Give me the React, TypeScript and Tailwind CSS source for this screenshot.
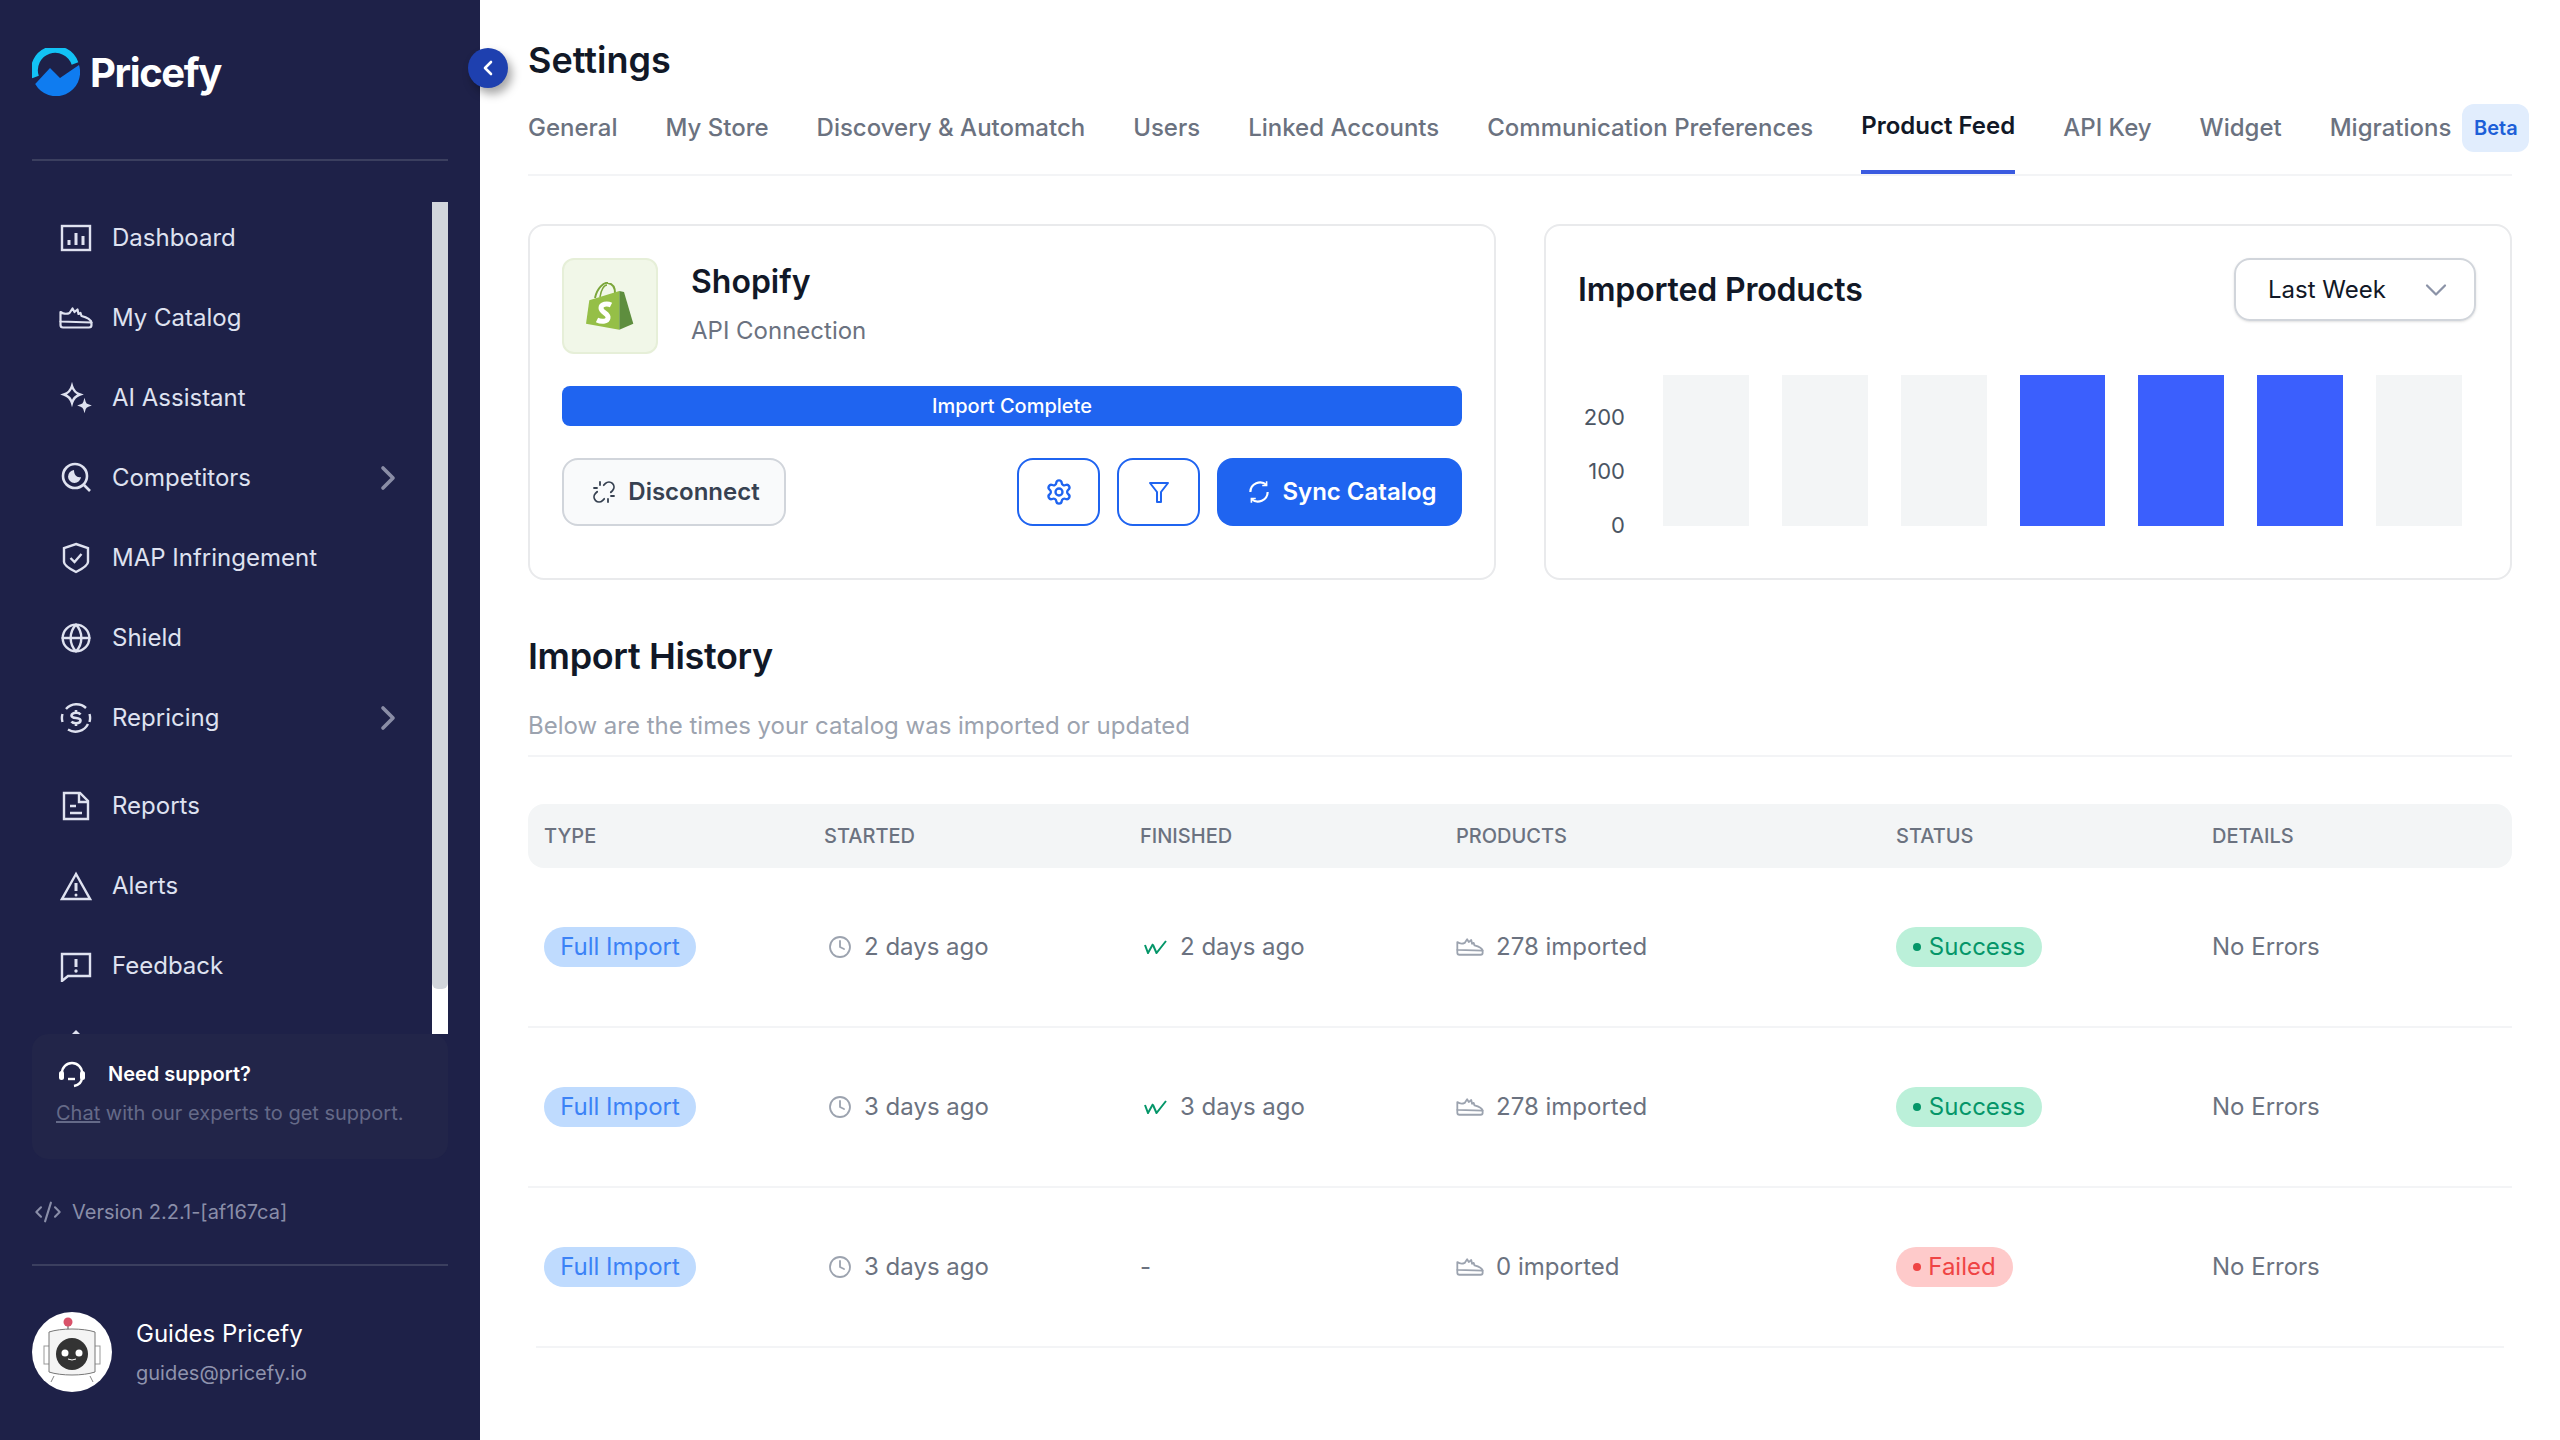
import type { ReactNode } from 'react';
import {
  ChevronDown,
  ChevronLeft,
  ChevronRight,
  Clock,
  CodeXml,
  Globe,
  Settings,
  Unlink,
} from 'lucide-react';

function Shoe({ className }: { className?: string }) {
  return (
    <svg viewBox="0 0 34 22" fill="none" stroke="currentColor" strokeWidth="2.200" strokeLinejoin="round" strokeLinecap="round" className={className}>
      <path d="M1.500 14.500 V5 c2 1.500 6 2.500 9 1 l3-4.500 2 3.500 3-2.500 1 4.500 2-1 1 3 c4 1 9 2.500 10 6.500 Z" />
      <path d="M1.500 14.500 v3.500 a2.500 2.500 0 0 0 2.500 2.500 h26 a2.500 2.500 0 0 0 2.500-2.500 c0-1.500-.2-2.500-.5-3.500" />
    </svg>
  );
}

function NavIcon({ name }: { name: string }) {
  const cls = 'h-8 w-8 shrink-0';
  const props = { viewBox: '0 0 32 32', fill: 'none', stroke: 'currentColor', strokeWidth: 2.4, className: cls };
  switch (name) {
    case 'dashboard':
      return (
        <svg {...props}>
          <rect x="2" y="4" width="28" height="24" />
          <path d="M9 23v-5M16 23V11M23 23v-9" strokeWidth="3" />
        </svg>
      );
    case 'catalog':
      return <Shoe className="-mx-px h-[22px] w-[34px] shrink-0" />;
    case 'ai':
      return (
        <svg {...props}>
          <path d="M12 4c1.500 5 3.500 7 8 8.500-4.500 1.500-6.500 3.500-8 8.500-1.500-5-3.500-7-8-8.500 4.500-1.500 6.500-3.500 8-8.500Z" />
          <path d="M24.500 20c.6 2 1.400 2.800 3.500 3.500-2.100.7-2.900 1.500-3.500 3.500-.6-2-1.400-2.800-3.500-3.500 2.100-.7 2.900-1.500 3.500-3.500Z" fill="currentColor" />
        </svg>
      );
    case 'competitors':
      return (
        <svg {...props}>
          <circle cx="15" cy="14" r="12" strokeWidth="2.600" />
          <path d="M24 23l6 6" strokeWidth="2.600" />
          <path d="M14 8a6.500 6.500 0 1 0 7 7c-4 1-7-2-7-7Z" fill="currentColor" stroke="none" />
        </svg>
      );
    case 'map':
      return (
        <svg {...props}>
          <path d="M16 2l12 4v14c0 3-6 7-12 10C10 27 4 23 4 20V6l12-4Z" />
          <path d="M10.500 16l4 4 7-8" />
        </svg>
      );
    case 'shield':
      return <Globe className={cls} strokeWidth={1.800} />;
    case 'repricing':
      return (
        <svg {...props}>
          <path d="M6 7A14 14 0 0 1 26 6M28 22A14 14 0 0 1 8 27.500M2.500 20a14 14 0 0 1 0-8M29.500 12a14 14 0 0 1 0 8" strokeWidth="2.400" />
          <path d="M20.500 12.500c-.8-1.200-2.500-1.700-4.500-1.700-2.700 0-4.500 1-4.500 2.700 0 2 2 2.300 4.500 2.500s4.500.6 4.500 2.500c0 1.700-1.800 2.700-4.500 2.700-2 0-3.700-.5-4.500-1.700M16 8v2.500M16 21.500V24" strokeWidth="2.600" />
        </svg>
      );
    case 'reports':
      return (
        <svg {...props}>
          <path d="M4 3h16l8 8v18H4V3Z" />
          <path d="M19 3v9h9M10 16h6M10 23h12" />
        </svg>
      );
    case 'alerts':
      return (
        <svg {...props}>
          <path d="M16 4L2 29h28L16 4Z" />
          <path d="M16 13v8" strokeWidth="3" />
          <circle cx="16" cy="25" r="1.500" fill="currentColor" stroke="none" />
        </svg>
      );
    default:
      return (
        <svg {...props}>
          <path d="M2 4h28v22H8l-6 5V4Z" />
          <path d="M16 9v8" strokeWidth="3" />
          <circle cx="16" cy="21" r="1.700" fill="currentColor" stroke="none" />
        </svg>
      );
  }
}

const navItems = [
  { key: 'dashboard', label: 'Dashboard' },
  { key: 'catalog', label: 'My Catalog' },
  { key: 'ai', label: 'AI Assistant' },
  { key: 'competitors', label: 'Competitors', more: true },
  { key: 'map', label: 'MAP Infringement' },
  { key: 'shield', label: 'Shield' },
  { key: 'repricing', label: 'Repricing', more: true },
  { key: 'reports', label: 'Reports', gap: true },
  { key: 'alerts', label: 'Alerts' },
  { key: 'feedback', label: 'Feedback' },
];

function Sidebar() {
  return (
    <aside className="relative flex h-[1440px] w-[480px] shrink-0 flex-col bg-[#1e2148] px-8">
      <div className="flex h-[161px] items-start gap-[10px] border-b-2 border-[#3b3f5f] pt-12">
        <svg viewBox="0 0 48 48" className="h-12 w-12 shrink-0" fill="none">
          <path d="M3.500 29 A20.500 20.500 0 0 1 43 15.500" stroke="#12c2f4" strokeWidth="7" />
          <path d="M3.200 36 L18 20 L28 30 L47 17 A24 24 0 0 1 3.200 36 Z" fill="#0f7cf0" />
        </svg>
        <span className="mt-px text-[40px] font-bold leading-[48px] tracking-[-0.035em] text-white">Pricefy</span>
      </div>

      <div className="mt-[37px] flex h-[836px] overflow-hidden">
        <nav className="flex-1">
          {navItems.map((item) => (
            <div key={item.key} className={`flex h-20 items-center pl-7 pr-6 text-[#dfe2f0] ${item.gap ? 'mt-2' : ''}`}>
              <NavIcon name={item.key} />
              <span className="ml-5 flex-1 text-[24px] leading-8">{item.label}</span>
              {item.more && <ChevronRight className="h-10 w-10 text-[#8a8da6]" strokeWidth={2.200} />}
            </div>
          ))}
          <div className="flex h-[29px] items-end pl-[39px]">
            <div className="h-0 w-0 border-x-[5px] border-b-[5px] border-x-transparent border-b-[#dfe2f0]" />
          </div>
        </nav>
        <div className="mt-1 w-4 bg-white">
          <div className="h-[787px] rounded-b-md bg-[#d1d5db]" />
        </div>
      </div>

      <div className="h-[125px] rounded-2xl bg-[#222549] px-6 pt-[26px]">
        <div className="flex items-center gap-[22px]">
          <svg viewBox="0 0 28 28" fill="none" stroke="white" strokeWidth="2.400" className="ml-0.5 h-7 w-7 shrink-0">
            <path d="M4 13a10 10 0 0 1 20 0v4c0 5-3 8-8 9" />
            <rect x="1" y="11" width="5" height="9" rx="2.500" fill="white" stroke="none" />
            <rect x="22" y="11" width="5" height="9" rx="2.500" fill="white" stroke="none" />
            <path d="M10 19h7" />
          </svg>
          <span className="text-[20px] font-semibold leading-6 text-white">Need support?</span>
        </div>
        <p className="mt-[13px] text-[20px] leading-6 text-[#656a88]">
          <span className="underline">Chat</span> with our experts to get support.
        </p>
      </div>

      <div className="mt-[39px] flex items-center gap-[10px] pl-0.5 text-[20px] leading-6 text-[#8a8ea8]">
        <CodeXml className="h-7 w-7" strokeWidth={1.800} />
        <span>Version 2.2.1-[af167ca]</span>
      </div>

      <div className="mt-[38px] h-0.5 bg-[#3b3f5f]" />

      <div className="mt-[46px] flex items-center gap-6">
        <svg viewBox="0 0 80 80" className="h-20 w-20 shrink-0">
          <circle cx="40" cy="40" r="40" fill="white" />
          <path d="M36 18v-6" stroke="#888" strokeWidth="1.500" />
          <circle cx="36" cy="10" r="4.500" fill="#d9536a" />
          <rect x="12" y="34" width="6" height="18" fill="#fff" stroke="#999" />
          <rect x="62" y="34" width="6" height="18" fill="#fff" stroke="#999" />
          <path d="M17 20c12-4 34-4 46 0v40c-12 4-34 4-46 0Z" fill="#f4f4f4" stroke="#777" />
          <circle cx="40" cy="42" r="16" fill="#333" />
          <circle cx="33" cy="41" r="3.500" fill="white" />
          <circle cx="47" cy="41" r="3.500" fill="white" />
          <path d="M36 47q4 2 8 0" stroke="white" fill="none" />
          <path d="M22 64l-3 6M58 64l3 6" stroke="#888" />
        </svg>
        <div>
          <div className="text-[24px] leading-8 text-white">Guides Pricefy</div>
          <div className="mt-[9px] text-[20px] leading-7 text-[#8f93ad]">guides@pricefy.io</div>
        </div>
      </div>

      <button className="absolute left-[468px] top-12 flex h-10 w-10 items-center justify-center rounded-full bg-[#1e40af] text-white shadow-[4px_6px_10px_rgba(0,0,0,0.35)]">
        <ChevronLeft className="h-6 w-6" strokeWidth={2.600} />
      </button>
    </aside>
  );
}

const tabs = ['General', 'My Store', 'Discovery & Automatch', 'Users', 'Linked Accounts', 'Communication Preferences', 'Product Feed', 'API Key', 'Widget', 'Migrations'];

function Tabs() {
  return (
    <div className="flex h-[94px] gap-12 border-b-2 border-[#f3f4f6]">
      {tabs.map((tab) => (
        <div key={tab} className={tab === 'Product Feed' ? 'h-[92px] whitespace-nowrap border-b-4 border-[#3b5be0] pt-7 text-[24px] font-semibold leading-8 text-[#111827]' : 'flex h-[92px] gap-[11px] whitespace-nowrap pt-[30px] text-[24px] font-medium leading-8 text-[#6b7280]'}>
          {tab}
          {tab === 'Migrations' && (
            <span className="-mt-2 flex h-12 w-[67px] shrink-0 items-center justify-center rounded-xl bg-[#e1edfd] text-[20px] font-semibold text-[#1d5fd8]">Beta</span>
          )}
        </div>
      ))}
    </div>
  );
}

function ShopifyCard() {
  return (
    <div className="h-[356px] rounded-2xl border-2 border-[#e9eaec] p-8">
      <div className="flex gap-[33px]">
        <div className="flex h-24 w-24 items-center justify-center rounded-xl border-2 border-[#e6efd8] bg-[#f1f7e8]">
          <svg viewBox="0 0 48 48" className="h-12 w-12" fill="none">
            <path d="M9 16C11 6 18 0 22 1C27 2 29 6 29 11" stroke="#7ba63a" strokeWidth="2" />
            <path d="M14 15C15 8 18 3 21 3" stroke="#7ba63a" strokeWidth="1.500" />
            <path d="M3.300 18.300L33.300 9V47.700L0 41.700Z" fill="#95bf47" />
            <path d="M33.300 9L38 10L47.300 41.700L33.300 47.700Z" fill="#5e8e3e" />
            <path d="M25 23C21 21 15 22 15 26C15 31 23 31 22 36C21.500 40 15 40 11 38" stroke="white" strokeWidth="5" />
          </svg>
        </div>
        <div>
          <div className="mt-1 text-[32px] font-semibold leading-10 text-[#111827]">Shopify</div>
          <div className="mt-[13px] text-[24px] leading-8 text-[#6b7280]">API Connection</div>
        </div>
      </div>
      <div className="mt-8 flex h-10 items-center justify-center rounded-lg bg-[#1f64f0] text-[20px] font-medium text-white">Import Complete</div>
      <div className="mt-8 flex gap-[17px]">
        <button className="mr-auto flex h-[68px] w-[224px] items-center justify-center gap-3 rounded-2xl border-2 border-[#d1d5db] bg-[#f9fafb] pl-1 text-[24px] font-semibold text-[#374151]">
          <Unlink className="h-6 w-6" strokeWidth={1.800} />
          Disconnect
        </button>
        <button className="flex h-[68px] w-[83px] items-center justify-center rounded-2xl border-2 border-[#1f64f0] text-[#1f64f0]">
          <Settings className="h-7 w-7" strokeWidth={2} />
        </button>
        <button className="flex h-[68px] w-[83px] items-center justify-center rounded-2xl border-2 border-[#1f64f0] text-[#1f64f0]">
          <svg viewBox="0 0 24 24" fill="none" stroke="currentColor" strokeWidth="2" strokeLinejoin="round" className="h-6 w-6">
            <path d="M3 3h18l-7 9v10h-4V12L3 3Z" />
          </svg>
        </button>
        <button className="flex h-[68px] w-[245px] items-center justify-center gap-[10px] rounded-2xl bg-[#1f64f0] pl-1 text-[24px] font-semibold text-white">
          <svg viewBox="0 0 24 24" fill="none" stroke="white" strokeWidth="2" className="h-[26px] w-[26px]">
            <path d="M4 12a9 9 0 0 1 15-6.500M20 12a9 9 0 0 1-15 6.500" />
            <path d="M19 2v4h-4M5 22v-4h4" strokeWidth="1.500" />
          </svg>
          Sync Catalog
        </button>
      </div>
    </div>
  );
}

const bars = [false, false, false, true, true, true, false];

function ChartCard() {
  return (
    <div className="h-[356px] rounded-2xl border-2 border-[#e9eaec] px-8 pt-8">
      <div className="flex h-[63px] items-center justify-between pr-0.5">
        <h3 className="text-[32px] font-semibold leading-10 tracking-[-0.005em] text-[#111827]">Imported Products</h3>
        <div className="flex h-[63px] w-[242px] items-center justify-between rounded-2xl border-2 border-[#d1d5db] pl-8 pr-5 text-[24px] text-[#111827] shadow-sm">
          Last Week
          <ChevronDown className="h-9 w-9 text-[#8b93a7]" strokeWidth={1.500} />
        </div>
      </div>
      <div className="mt-[54px] flex h-[151px]">
        <div className="w-[47px] pt-[15px] text-right text-[22px] leading-[54px] text-[#4b5563]">
          <div>200</div>
          <div>100</div>
          <div>0</div>
        </div>
        <div className="ml-[38px] grid w-[799px] grid-cols-7 gap-[33px]">
          {bars.map((on, i) => (
            <div key={i} className={on ? 'bg-[#3b5ffd]' : 'bg-[#f3f5f6]'} />
          ))}
        </div>
      </div>
    </div>
  );
}

const rows = [
  { started: '2 days ago', finished: '2 days ago', products: '278 imported', ok: true },
  { started: '3 days ago', finished: '3 days ago', products: '278 imported', ok: true },
  { started: '3 days ago', finished: '-', products: '0 imported', ok: false },
];

const gridCols = 'grid grid-cols-[280px_316px_316px_440px_316px_1fr] items-center';

function Cell({ icon, children }: { icon?: ReactNode; children: ReactNode }) {
  return (
    <div className="flex items-center gap-3 text-[24px] text-[#6b7280]">
      {icon}
      <span>{children}</span>
    </div>
  );
}

function DoubleCheck() {
  return (
    <svg viewBox="0 0 24 14" fill="none" stroke="#059669" strokeWidth="2" className="ml-1 h-[14px] w-6">
      <path d="M1 5l3 8 5-9" />
      <path d="M9 5l3.500 8L22 1" />
    </svg>
  );
}

function HistoryTable() {
  return (
    <div className="mt-[47px]">
      <div className={`${gridCols} h-16 rounded-2xl bg-[#f3f5f6] px-4 text-[20px] font-medium uppercase text-[#6b7280]`}>
        <div>Type</div>
        <div>Started</div>
        <div>Finished</div>
        <div>Products</div>
        <div>Status</div>
        <div>Details</div>
      </div>
      {rows.map((row, i) => (
        <div key={i} className={`${gridCols} h-40 border-b-2 border-[#f3f4f6] ${i === 2 ? 'mx-2 px-2' : 'px-4'}`}>
          <div>
            <span className="inline-flex h-10 w-[152px] items-center justify-center rounded-full bg-[#bfdbfe] text-[24px] text-[#3b82f6]">Full Import</span>
          </div>
          <Cell icon={<Clock className="ml-1 h-6 w-6 text-[#9ca3af]" strokeWidth={1.800} />}>{row.started}</Cell>
          {row.finished === '-' ? <Cell>{row.finished}</Cell> : <Cell icon={<DoubleCheck />}>{row.finished}</Cell>}
          <Cell icon={<Shoe className="h-[18px] w-7 text-[#9ca3af]" />}>{row.products}</Cell>
          <div>
            {row.ok ? (
              <span className="inline-flex h-10 w-[146px] items-center justify-center gap-2 rounded-full bg-[#bbf0d9] text-[24px] text-[#059669]">
                <i className="h-2 w-2 rounded-full bg-[#059669]" />
                Success
              </span>
            ) : (
              <span className="inline-flex h-10 w-[117px] items-center justify-center gap-[7px] rounded-full bg-[#fecaca] text-[24px] text-[#ef4444]">
                <i className="h-2 w-2 rounded-full bg-[#ef4444]" />
                Failed
              </span>
            )}
          </div>
          <div className="text-[24px] text-[#6b7280]">No Errors</div>
        </div>
      ))}
    </div>
  );
}

export default function App() {
  return (
    <div className="flex h-[1440px] w-[2560px] overflow-hidden bg-white font-['Inter',sans-serif]">
      <Sidebar />
      <main className="min-w-0 flex-1 pl-12 pr-12 pt-[38px]">
        <h1 className="text-[36px] font-semibold leading-[44px] text-[#111827]">Settings</h1>
        <Tabs />
        <div className="mt-[48px] grid grid-cols-2 gap-12">
          <ShopifyCard />
          <ChartCard />
        </div>
        <h2 className="mt-[54px] text-[36px] font-semibold leading-[44px] tracking-[-0.01em] text-[#111827]">Import History</h2>
        <p className="mt-8 border-b-2 border-[#f3f4f6] pb-[13px] text-[24px] leading-8 text-[#9ca3af]">Below are the times your catalog was imported or updated</p>
        <HistoryTable />
      </main>
    </div>
  );
}
